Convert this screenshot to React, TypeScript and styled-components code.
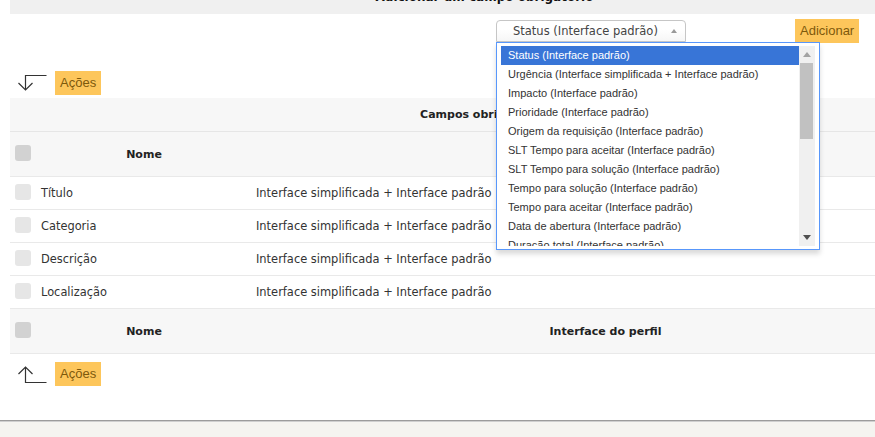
import React from "react";
import styled, { createGlobalStyle } from "styled-components";

const Global = createGlobalStyle`
  html, body { margin: 0; padding: 0; overflow: hidden; background: #fff; }
  *, *::before, *::after { box-sizing: border-box; }
  body { font-family: "DejaVu Sans", Verdana, sans-serif; color: #333; }
`;

const Page = styled.div`
  margin-top: -20px;
  display: flex;
  flex-direction: column;
  width: 875px;
  height: 457px;
`;

const Main = styled.div`
  padding: 0 0 34px 10px;
  display: flex;
  flex-direction: column;
  width: 959px;
`;

const TitleBand = styled.div`
  width: 949px;
  height: 34px;
  line-height: 34px;
  background: #f0f0f0;
  text-align: center;
  font-weight: bold;
  font-size: 12px;
  color: #111;
`;

const AddRow = styled.div`
  display: flex;
  align-items: center;
  height: 24px;
  margin-top: 5px;
`;

const SelectWrap = styled.div`
  position: relative;
  margin-left: 486px;
  width: 190px;
`;

const SelectBox = styled.div`
  height: 22px;
  border: 1px solid #c6c6c6;
  border-radius: 4px 4px 0 0;
  background: linear-gradient(#ffffff 40%, #f6f6f6);
  display: flex;
  align-items: center;
  padding: 0 8px 0 16px;
  font-size: 11.5px;
  color: #444;
  white-space: nowrap;
`;

const SelectText = styled.span`
  flex: 1;
`;

const Triangle = styled.span<{ $dir: "up" | "down"; $color: string; $size?: number }>`
  width: 0;
  height: 0;
  border-left: ${(p) => p.$size ?? 3}px solid transparent;
  border-right: ${(p) => p.$size ?? 3}px solid transparent;
  ${(p) =>
    p.$dir === "up"
      ? `border-bottom: ${(p.$size ?? 3) + 1}px solid ${p.$color};`
      : `border-top: ${(p.$size ?? 3) + 1}px solid ${p.$color};`}
`;

const Drop = styled.div`
  position: absolute;
  top: 22px;
  left: 0;
  width: 324px;
  height: 208px;
  background: #fff;
  border: 1px solid #5897fb;
  box-shadow: 0 4px 5px rgba(0, 0, 0, 0.15);
  padding: 3px 4px;
  display: flex;
  z-index: 5;
`;

const Options = styled.ul`
  list-style: none;
  margin: 0;
  padding: 0;
  flex: 1;
  height: 200px;
  overflow: hidden;
`;

const Option = styled.li<{ $active?: boolean }>`
  height: 19px;
  line-height: 19px;
  padding-left: 7px;
  font-family: "Liberation Sans", Arial, sans-serif;
  font-size: 11px;
  white-space: nowrap;
  color: ${(p) => (p.$active ? "#fff" : "#333")};
  background: ${(p) => (p.$active ? "#3875d7" : "transparent")};
`;

const Scrollbar = styled.div`
  width: 16px;
  height: 200px;
  background: #f0f0f0;
  display: flex;
  flex-direction: column;
`;

const ScrollBtn = styled.div`
  height: 17px;
  display: flex;
  align-items: center;
  justify-content: center;
`;

const Thumb = styled.div`
  height: 76px;
  margin: 0 2px 0 1px;
  background: #c1c1c1;
`;

const Spacer = styled.div`
  flex: 1;
`;

const YellowButton = styled.div<{ $ml?: number }>`
  height: 24px;
  line-height: 24px;
  padding: 0 5px;
  margin-left: ${(p) => p.$ml ?? 0}px;
  background: #fdc65b;
  color: #7d590c;
  font-family: "Liberation Sans", Arial, sans-serif;
  font-size: 13px;
`;

const ActionsRow = styled.div<{ $mt: number }>`
  display: flex;
  align-items: center;
  margin-top: ${(p) => p.$mt}px;
  height: 24px;
`;

const ArrowIcon = styled.svg`
  margin-left: 7px;
  margin-right: 7px;
  flex: none;
`;

const Table = styled.div`
  width: 949px;
  margin-top: 3px;
  display: flex;
  flex-direction: column;
`;

const CaptionRow = styled.div`
  height: 34px;
  border-bottom: 1px solid #e6e6e6;
  background: #f7f7f7;
  display: flex;
  align-items: center;
  justify-content: center;
  font-weight: bold;
  font-size: 11px;
  color: #222;
`;

const Row = styled.div<{ $head?: boolean }>`
  display: grid;
  grid-template-columns: 26px 216px 1fr;
  align-items: center;
  height: ${(p) => (p.$head ? 45 : 33)}px;
  background: ${(p) => (p.$head ? "#f7f7f7" : "#fff")};
  border-bottom: 1px solid #e9e9e9;
`;

const CheckCell = styled.div`
  padding-left: 5px;
  display: flex;
  align-items: center;
`;

const Check = styled.div<{ $head?: boolean }>`
  width: 16px;
  height: 16px;
  border-radius: 3px;
  background: ${(p) => (p.$head ? "#d2d2d2" : "#e6e6e6")};
  margin-top: ${(p) => (p.$head ? -3 : -2)}px;
`;

const HeadCell = styled.div`
  text-align: center;
  font-weight: bold;
  font-size: 11px;
  color: #222;
`;

const Cell = styled.div`
  padding-left: 5px;
  font-size: 11.4px;
  color: #333;
  white-space: nowrap;
`;

const ValueCell = styled(Cell)`
  padding-left: 4px;
  font-size: 11.45px;
`;

const Footer = styled.div`
  flex: 1;
  border-top: 1px solid #9c9c9c;
  box-shadow: inset 0 1px 0 #cfcfcf;
  background: #f5f4f0;
`;

const options = [
  "Status (Interface padrão)",
  "Urgência (Interface simplificada + Interface padrão)",
  "Impacto (Interface padrão)",
  "Prioridade (Interface padrão)",
  "Origem da requisição (Interface padrão)",
  "SLT Tempo para aceitar (Interface padrão)",
  "SLT Tempo para solução (Interface padrão)",
  "Tempo para solução (Interface padrão)",
  "Tempo para aceitar (Interface padrão)",
  "Data de abertura (Interface padrão)",
  "Duração total (Interface padrão)",
  "Data de fechamento (Interface padrão)",
];

const rows = ["Título", "Categoria", "Descrição", "Localização"];

const DownArrow = () => (
  <ArrowIcon width="31" height="18" viewBox="0 0 31 18">
    <path d="M29.5 1.5 H8.5 V16 M1.5 9 L8.5 16 L15.5 9" fill="none" stroke="#333" strokeWidth="1.2" />
  </ArrowIcon>
);

const UpArrow = () => (
  <ArrowIcon width="31" height="20" viewBox="0 0 31 20">
    <path d="M29.5 18.5 H8.5 V3 M1.5 10 L8.5 3 L15.5 10" fill="none" stroke="#333" strokeWidth="1.2" />
  </ArrowIcon>
);

const HeaderRow = () => (
  <Row $head>
    <CheckCell>
      <Check $head />
    </CheckCell>
    <HeadCell>Nome</HeadCell>
    <HeadCell>Interface do perfil</HeadCell>
  </Row>
);

export default function App() {
  return (
    <>
      <Global />
      <Page>
        <Main>
          <TitleBand>Adicionar um campo obrigatório</TitleBand>
          <AddRow>
            <SelectWrap>
              <SelectBox>
                <SelectText>Status (Interface padrão)</SelectText>
                <Triangle $dir="up" $color="#999" />
              </SelectBox>
              <Drop>
                <Options>
                  {options.map((o, i) => (
                    <Option key={o} $active={i === 0}>
                      {o}
                    </Option>
                  ))}
                </Options>
                <Scrollbar>
                  <ScrollBtn>
                    <Triangle $dir="up" $color="#a3a3a3" $size={4} />
                  </ScrollBtn>
                  <Thumb />
                  <Spacer />
                  <ScrollBtn>
                    <Triangle $dir="down" $color="#505050" $size={4} />
                  </ScrollBtn>
                </Scrollbar>
              </Drop>
            </SelectWrap>
            <YellowButton $ml={109}>Adicionar</YellowButton>
          </AddRow>
          <ActionsRow $mt={28}>
            <DownArrow />
            <YellowButton>Ações</YellowButton>
          </ActionsRow>
          <Table>
            <CaptionRow>Campos obrigatórios</CaptionRow>
            <HeaderRow />
            {rows.map((r) => (
              <Row key={r}>
                <CheckCell>
                  <Check />
                </CheckCell>
                <Cell>{r}</Cell>
                <ValueCell>Interface simplificada + Interface padrão</ValueCell>
              </Row>
            ))}
            <HeaderRow />
          </Table>
          <ActionsRow $mt={8}>
            <UpArrow />
            <YellowButton>Ações</YellowButton>
          </ActionsRow>
        </Main>
        <Footer />
      </Page>
    </>
  );
}
